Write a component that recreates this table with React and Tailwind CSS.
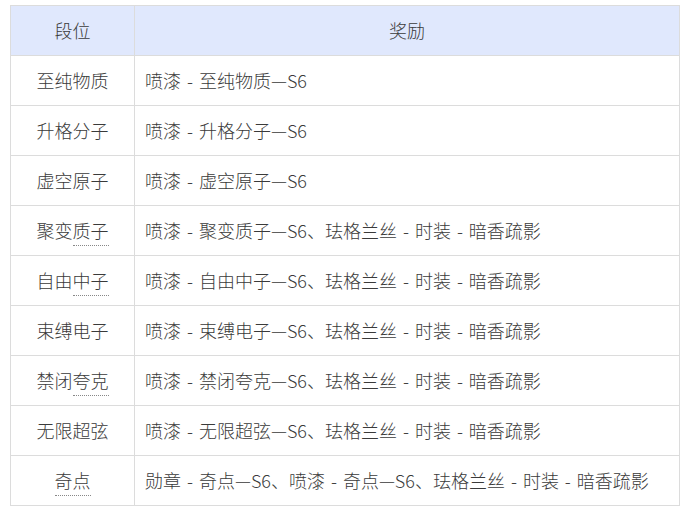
import React from "react";

const rows = [
  { name: "至纯物质", dot: false, reward: "喷漆 - 至纯物质—S6" },
  { name: "升格分子", dot: false, reward: "喷漆 - 升格分子—S6" },
  { name: "虚空原子", dot: false, reward: "喷漆 - 虚空原子—S6" },
  { name: "聚变质子", dot: true, reward: "喷漆 - 聚变质子—S6、珐格兰丝 - 时装 - 暗香疏影" },
  { name: "自由中子", dot: true, reward: "喷漆 - 自由中子—S6、珐格兰丝 - 时装 - 暗香疏影" },
  { name: "束缚电子", dot: false, reward: "喷漆 - 束缚电子—S6、珐格兰丝 - 时装 - 暗香疏影" },
  { name: "禁闭夸克", dot: true, reward: "喷漆 - 禁闭夸克—S6、珐格兰丝 - 时装 - 暗香疏影" },
  { name: "无限超弦", dot: false, reward: "喷漆 - 无限超弦—S6、珐格兰丝 - 时装 - 暗香疏影" },
  { name: "奇点", dot: true, full: true, reward: "勋章 - 奇点—S6、喷漆 - 奇点—S6、珐格兰丝 - 时装 - 暗香疏影" },
];

function Name({ r }) {
  if (!r.dot) return <span>{r.name}</span>;
  if (r.full)
    return <span className="border-b border-dotted border-[#888] pb-[2px]">{r.name}</span>;
  return (
    <span>
      {r.name.slice(0, 2)}
      <span className="border-b border-dotted border-[#888] pb-[2px]">{r.name.slice(2)}</span>
    </span>
  );
}

export default function App() {
  return (
    <div
      className="bg-white w-[697px] h-[516px] pl-[10px] pt-[5px] text-[#3a3a3a] text-[18px] font-light [word-spacing:2px]"
      style={{ fontFamily: '"Microsoft YaHei", "Noto Sans CJK SC", sans-serif' }}
    >
      <table className="w-[670px] border-collapse table-fixed">
        <colgroup>
          <col className="w-[124px]" />
          <col />
        </colgroup>
        <thead>
          <tr className="h-[50px] bg-[#e0e8fd]">
            <th className="border border-[#dcdcdc] font-light text-center">段位</th>
            <th className="border border-[#dcdcdc] font-light text-center">奖励</th>
          </tr>
        </thead>
        <tbody>
          {rows.map((r) => (
            <tr key={r.name} className="h-[50px]">
              <td className="border border-[#dcdcdc] text-center">
                <Name r={r} />
              </td>
              <td className="border border-[#dcdcdc] px-[10px] whitespace-nowrap">{r.reward}</td>
            </tr>
          ))}
        </tbody>
      </table>
    </div>
  );
}
